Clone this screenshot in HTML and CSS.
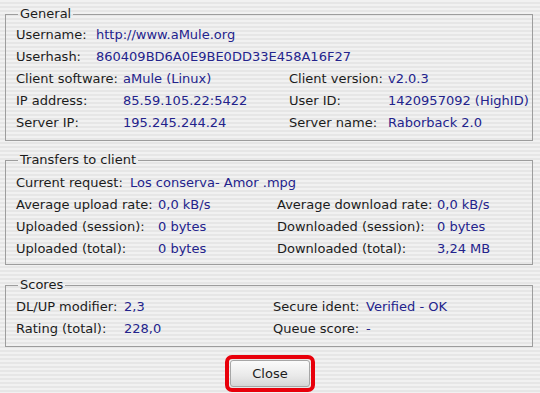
FILE: index.html
```html
<!DOCTYPE html>
<html lang="en">
<head>
  <meta charset="UTF-8">
  <title>Client details</title>
  <link rel="stylesheet" href="styles.css">
</head>
<body>

  <!-- General -->
  <fieldset class="box general">
    <legend>General</legend>
    <div class="line">
      <span class="lbl w-user">Username:</span>
      <span class="val">http://www.aMule.org</span>
    </div>
    <div class="line">
      <span class="lbl w-user">Userhash:</span>
      <span class="val">860409BD6A0E9BE0DD33E458A16F27</span>
    </div>
    <div class="grid grid-general">
      <span class="lbl">Client software:</span>
      <span class="val">aMule (Linux)</span>
      <span class="lbl">Client version:</span>
      <span class="val">v2.0.3</span>
      <span class="lbl">IP address:</span>
      <span class="val">85.59.105.22:5422</span>
      <span class="lbl">User ID:</span>
      <span class="val">1420957092 (HighID)</span>
      <span class="lbl">Server IP:</span>
      <span class="val">195.245.244.24</span>
      <span class="lbl">Server name:</span>
      <span class="val">Raborback 2.0</span>
    </div>
  </fieldset>

  <!-- Transfers -->
  <fieldset class="box transfers">
    <legend>Transfers to client</legend>
    <div class="line">
      <span class="lbl w-req">Current request:</span>
      <span class="val">Los conserva- Amor .mpg</span>
    </div>
    <div class="grid grid-transfers">
      <span class="lbl">Average upload rate:</span>
      <span class="val">0,0 kB/s</span>
      <span class="lbl">Average download rate:</span>
      <span class="val">0,0 kB/s</span>
      <span class="lbl">Uploaded (session):</span>
      <span class="val">0 bytes</span>
      <span class="lbl">Downloaded (session):</span>
      <span class="val">0 bytes</span>
      <span class="lbl">Uploaded (total):</span>
      <span class="val">0 bytes</span>
      <span class="lbl">Downloaded (total):</span>
      <span class="val">3,24 MB</span>
    </div>
  </fieldset>

  <!-- Scores -->
  <fieldset class="box scores">
    <legend>Scores</legend>
    <div class="grid grid-scores">
      <span class="lbl">DL/UP modifier:</span>
      <span class="val">2,3</span>
      <span class="lbl">Secure ident:</span>
      <span class="val">Verified - OK</span>
      <span class="lbl">Rating (total):</span>
      <span class="val">228,0</span>
      <span class="lbl">Queue score:</span>
      <span class="val">-</span>
    </div>
  </fieldset>

  <div class="actions">
    <div class="mark">
      <button class="btn">Close</button>
    </div>
  </div>

</body>
</html>
```

FILE: styles.css
```css
body {
  margin: 0;
  padding: 7px 7px 0 5px;
  font-family: "DejaVu Sans", Verdana, sans-serif;
  font-size: 13px;
  color: #1c1c1c;
  background: repeating-linear-gradient(to bottom, #f1f1f1 0, #f1f1f1 2px, #e6e6e6 2px, #e6e6e6 4px);
  height: 393px;
  box-sizing: border-box;
  overflow: hidden;
}

.box {
  margin: 0;
  border: 1px solid #9d9d9d;
  padding: 0 4px 0 10px;
  min-width: 0;
}

.box legend {
  margin-left: 2px;
  padding: 0 2px;
  line-height: 14px;
  color: #1c1c1c;
}

.general {
  padding-top: 3px;
  padding-bottom: 6px;
}

.transfers {
  margin-top: 12px;
  padding-top: 5px;
  padding-bottom: 4px;
}

.scores {
  margin-top: 13px;
  padding-top: 4px;
  padding-bottom: 6px;
}

.line {
  display: flex;
  height: 22px;
  line-height: 22px;
  white-space: nowrap;
}

.lbl {
  white-space: nowrap;
}

.val {
  color: #23238c;
  white-space: nowrap;
}

.w-user {
  width: 80px;
}

.w-req {
  width: 114px;
}

.grid {
  display: grid;
  grid-auto-rows: 22px;
  line-height: 22px;
}

.grid-general {
  grid-template-columns: 107px 166px 99px 1fr;
}

.grid-transfers {
  grid-template-columns: 142px 119px 160px 1fr;
}

.grid-scores {
  grid-template-columns: 108px 149px 93px 1fr;
}

.actions {
  display: flex;
  justify-content: center;
  margin-top: 8px;
  padding-left: 2px;
}

.mark {
  border: 4px solid #e8000b;
  border-radius: 7px;
  padding: 1px;
  display: flex;
}

.btn {
  width: 80px;
  height: 27px;
  font-family: "DejaVu Sans", Verdana, sans-serif;
  font-size: 13px;
  color: #1c1c1c;
  border: 1px solid #a6a6a6;
  border-radius: 3px;
  background: linear-gradient(to bottom, #fbfbfb, #e9e9e9 60%, #d6d6d6);
  padding: 0;
}
```
